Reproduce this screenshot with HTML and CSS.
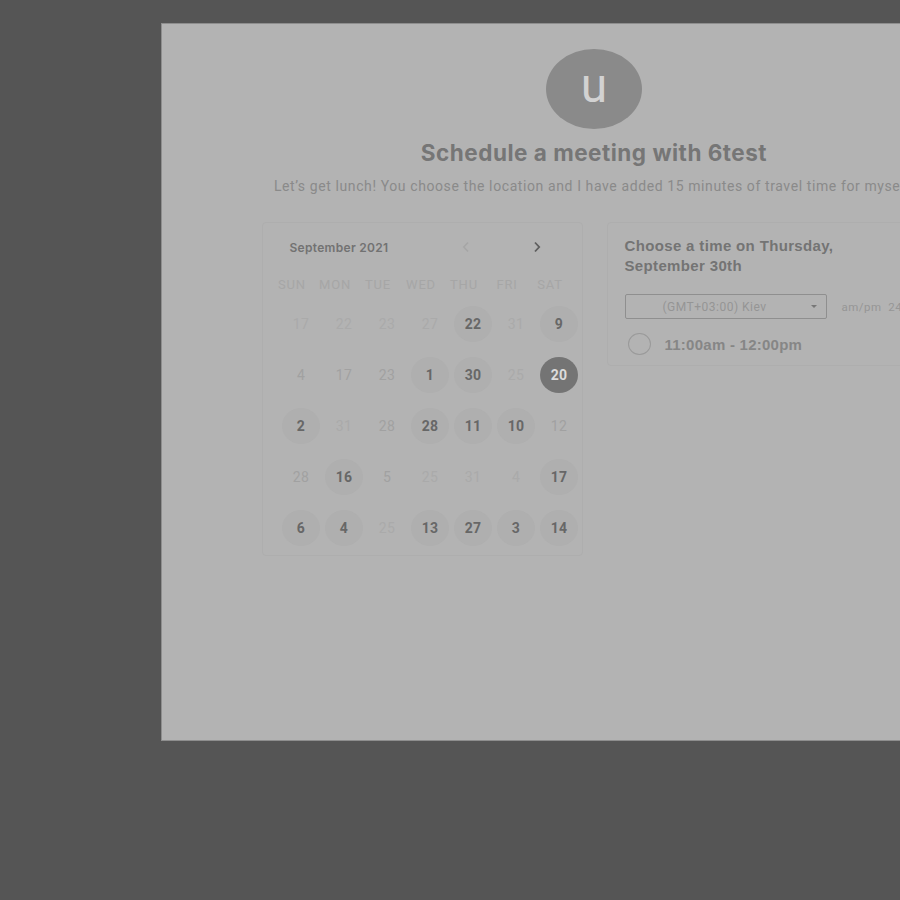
FILE: index.html
```html
<!DOCTYPE html>
<html lang="en">
<head>
<meta charset="utf-8">
<title>Schedule a meeting with 6test</title>
<link rel="stylesheet" href="styles.css">
</head>
<body>
<div class="modal">
  <div class="avatar">u</div>
  <h1 class="title">Schedule a meeting with 6test</h1>
  <p class="subtitle">Let’s get lunch! You choose the location and I have added 15 minutes of travel time for myself.</p>
  <div class="cards">
    <div class="card calendar">
      <div class="cal-head">
        <span class="month">September 2021</span>
        <span class="arrow prev">
          <svg width="8" height="12" viewBox="0 0 8 12"><path d="M6 1.5 1.8 6 6 10.5" fill="none" stroke="currentColor" stroke-width="1.6"/></svg>
        </span>
        <span class="arrow next">
          <svg width="8" height="12" viewBox="0 0 8 12"><path d="M2 1.5 6.2 6 2 10.5" fill="none" stroke="currentColor" stroke-width="1.8"/></svg>
        </span>
      </div>
      <div class="weekdays">
        <span>SUN</span><span>MON</span><span>TUE</span><span>WED</span><span>THU</span><span>FRI</span><span>SAT</span>
      </div>
      <div class="days">
        <span class="d off">17</span><span class="d off">22</span><span class="d off">23</span><span class="d off">27</span><span class="d av">22</span><span class="d off">31</span><span class="d av">9</span>
        <span class="d dim">4</span><span class="d dim">17</span><span class="d dim">23</span><span class="d av">1</span><span class="d av">30</span><span class="d off">25</span><span class="d sel">20</span>
        <span class="d av">2</span><span class="d off">31</span><span class="d dim">28</span><span class="d av">28</span><span class="d av">11</span><span class="d av">10</span><span class="d dim">12</span>
        <span class="d dim">28</span><span class="d av">16</span><span class="d dim">5</span><span class="d off">25</span><span class="d off">31</span><span class="d off">4</span><span class="d av">17</span>
        <span class="d av">6</span><span class="d av">4</span><span class="d off">25</span><span class="d av">13</span><span class="d av">27</span><span class="d av">3</span><span class="d av">14</span>
      </div>
    </div>
    <div class="card times">
      <div class="times-title">Choose a time on Thursday,<br>September 30th</div>
      <div class="tz-row">
        <div class="tz-select">
          <span class="tz-text">(GMT+03:00) Kiev</span>
          <span class="caret"></span>
        </div>
        <span class="format">am/pm&nbsp; 24h</span>
      </div>
      <div class="slot">
        <span class="radio"></span>
        <span class="slot-text">11:00am - 12:00pm</span>
      </div>
    </div>
  </div>
</div>
</body>
</html>
```

FILE: styles.css
```css
html, body {
  margin: 0;
  padding: 0;
}
body {
  background: #555555;
  width: 900px;
  height: 900px;
  overflow: hidden;
  font-family: Roboto, "Liberation Sans", sans-serif;
}
.modal {
  box-sizing: border-box;
  margin: 23px 0 0 161px;
  width: 866px;
  height: 718px;
  background: #b3b3b3;
  border: 1px solid #8e8e8e;
  display: flex;
  flex-direction: column;
  align-items: center;
  padding-top: 25px;
}
.avatar {
  width: 96px;
  height: 80px;
  border-radius: 50%;
  background: #8a8a8a;
  color: #d2d2d2;
  font-family: Roboto, sans-serif;
  font-size: 48px;
  line-height: 74px;
  text-align: center;
}
.title {
  margin: 11px 0 0;
  font-family: Inter, "Liberation Sans", sans-serif;
  font-weight: 700;
  font-size: 22.5px;
  letter-spacing: 0.5px;
  line-height: 26px;
  color: #767676;
  white-space: nowrap;
}
.subtitle {
  margin: 11px 0 0;
  font-size: 14px;
  letter-spacing: 0.6px;
  line-height: 18px;
  color: #8a8a8a;
  white-space: nowrap;
}
.cards {
  margin-top: 27px;
  display: flex;
  gap: 24px;
  align-items: flex-start;
}
.card {
  box-sizing: border-box;
  border: 1px solid #aeaeae;
  border-radius: 4px;
  background: #b3b3b3;
}
.calendar {
  width: 321px;
  height: 334px;
  padding-top: 12px;
}
.cal-head {
  display: flex;
  align-items: center;
  height: 24px;
}
.month {
  margin-left: 27px;
  font-family: Inter, "Liberation Sans", sans-serif;
  font-weight: 600;
  font-size: 12px;
  letter-spacing: 0.3px;
  color: #727272;
  width: 171px;
}
.arrow {
  display: flex;
  width: 8px;
  height: 12px;
}
.prev {
  margin-left: 1px;
  color: #a6a6a6;
}
.next {
  margin-left: 63px;
  color: #5e5e5e;
}
.weekdays {
  margin-top: 15px;
  padding-left: 8px;
  display: grid;
  grid-template-columns: repeat(7, 43px);
  height: 20px;
  align-items: center;
}
.weekdays span {
  text-align: center;
  font-size: 13px;
  color: #a6a6a6;
  letter-spacing: 0.8px;
}
.days {
  margin-top: 4px;
  padding-left: 17px;
  display: grid;
  grid-template-columns: repeat(7, 43px);
  grid-auto-rows: 51.2px;
  align-items: center;
  justify-items: center;
}
.d {
  width: 38px;
  height: 36px;
  border-radius: 50%;
  display: flex;
  align-items: center;
  justify-content: center;
  font-size: 14px;
  letter-spacing: 0.3px;
}
.d.off {
  color: #aaaaaa;
}
.d.dim {
  color: #a1a1a1;
}
.d.av {
  background: #afafaf;
  color: #676767;
  font-weight: 700;
}
.d.sel {
  background: #747474;
  color: #dcdcdc;
  font-weight: 700;
}
.times {
  width: 320px;
  height: 144px;
  padding: 13px 0 0 17px;
}
.times-title {
  font-family: "Liberation Sans", Arial, sans-serif;
  font-weight: 700;
  font-size: 15px;
  letter-spacing: 0.35px;
  line-height: 20px;
  color: #747474;
}
.tz-row {
  margin-top: 18px;
  display: flex;
  align-items: center;
  white-space: nowrap;
}
.tz-select {
  box-sizing: border-box;
  width: 202px;
  height: 25px;
  border: 1px solid #8f8f8f;
  border-radius: 2px;
  display: flex;
  align-items: center;
  font-size: 12px;
  letter-spacing: 0.5px;
  color: #959595;
}
.tz-text {
  margin-left: 37px;
  flex: 1;
}
.caret {
  width: 0;
  height: 0;
  border-left: 3px solid transparent;
  border-right: 3px solid transparent;
  border-top: 3px solid #777;
  margin-right: 9px;
}
.format {
  margin-left: 15px;
  font-size: 11.5px;
  letter-spacing: 0.5px;
  color: #969696;
}
.slot {
  margin-top: 14px;
  display: flex;
  align-items: center;
  height: 22px;
}
.radio {
  box-sizing: border-box;
  width: 23px;
  height: 22px;
  border: 1px solid #9a9a9a;
  border-radius: 50%;
  margin-left: 3px;
}
.slot-text {
  margin-left: 14px;
  font-family: "Liberation Sans", Arial, sans-serif;
  font-weight: 700;
  font-size: 15px;
  letter-spacing: 0.25px;
  color: #868686;
}
```
